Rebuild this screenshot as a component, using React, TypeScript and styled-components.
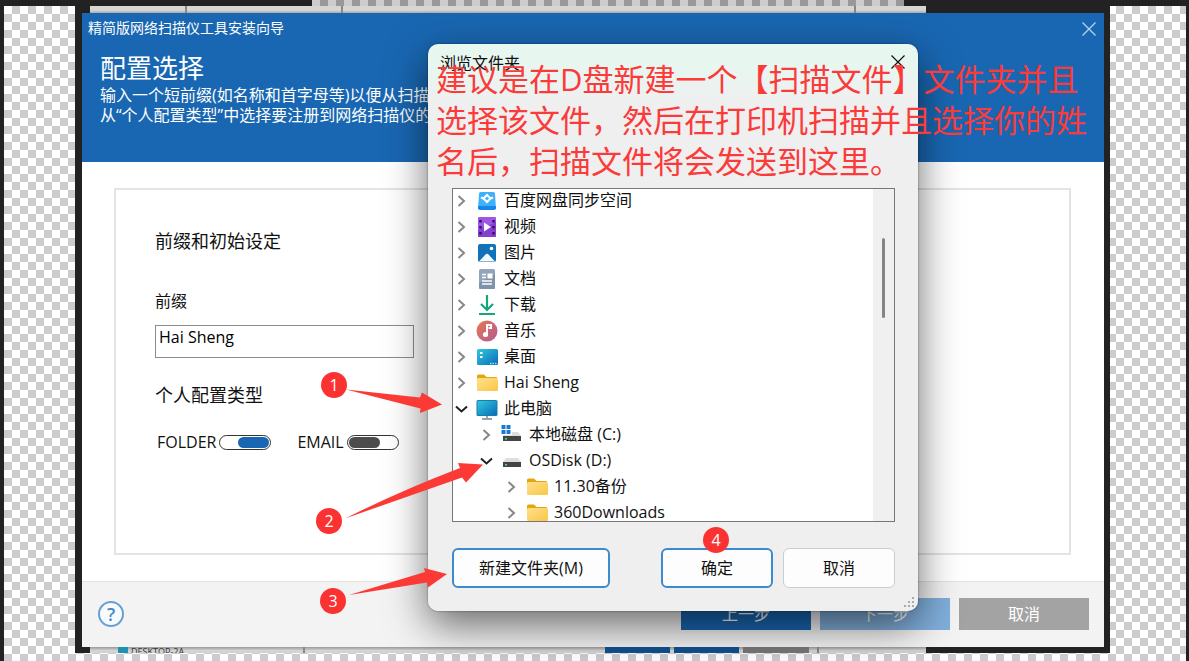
import React from 'react';
import styled, { createGlobalStyle, css } from 'styled-components';

const Global = createGlobalStyle`
  *, *::before, *::after { box-sizing: border-box; }
  body { margin: 0; overflow: hidden; font-family: "Open Sans", "Noto Sans CJK SC", sans-serif; font-size: 16px; color: #111; }
  h1, h2, p, ul { margin: 0; padding: 0; font-weight: 400; }
  button, input { font: inherit; }
`;

const Desktop = styled.main`
  position: relative;
  min-height: 100vh;
  display: flex;
  flex-direction: column;
  border-left: 4px solid #222;
  border-right: 3px solid #222;
  background: repeating-conic-gradient(#ccc 0 25%, #fff 0 50%) 0 6px / 16px 16px;
`;

const TopBar = styled.div`
  height: 6px;
  display: flex;
  justify-content: space-between;
  background: #222;
  padding: 0 282px 0 308px;
`;

const TopChecker = styled.div`
  flex: 1;
  background: repeating-conic-gradient(#999 0 25%, #ccc 0 50%) 0 -2px / 16px 16px;
`;

const Frame = styled.div`
  flex: 1;
  display: flex;
  flex-direction: column;
  margin: 0 76px 8px 71px;
  padding: 0 6px 0 7px;
  background: #222;
`;

const Strip = styled.div<{ $bottom?: boolean }>`
  display: flex;
  align-items: flex-start;
  height: ${p => (p.$bottom ? 6 : 7)}px;
  margin: 0 178px 0 8px;
  overflow: hidden;
  background: ${p => (p.$bottom ? 'linear-gradient(#999, #d4d4d4 60%)' : 'linear-gradient(#d8d5d2 60%, #aaa)')};
`;

const Cell = styled.span<{ $w: number; $bg?: string; $line?: boolean; $gap?: number }>`
  flex: none;
  width: ${p => p.$w}px;
  height: 100%;
  margin-right: ${p => p.$gap ?? 0}px;
  background: ${p => p.$bg ?? 'transparent'};
  ${p => p.$line && css`border-right: 2px solid #888;`}
`;

const ClippedName = styled.span`
  flex: none;
  width: 56px;
  font-size: 9px;
  line-height: 10px;
  white-space: nowrap;
  color: #333;
`;

const Wizard = styled.section`
  flex: 1;
  display: flex;
  flex-direction: column;
  background: #fff;
`;

const WizardHeader = styled.header`
  height: 149px;
  padding: 4px 6px;
  background: #1967b2;
  color: #fff;
`;

const TitleRow = styled.div`
  display: flex;
  justify-content: space-between;
  font-size: 14px;
  line-height: 22px;
`;

const IconButton = styled.button<{ $color?: string }>`
  display: grid;
  place-items: center;
  width: 18px;
  height: 24px;
  border: 0;
  padding: 0;
  background: none;
  color: ${p => p.$color ?? 'inherit'};
`;

const HeaderText = styled.div`
  padding: 10px 12px 0;
  h1 { font-size: 26px; line-height: 34px; }
  p { font-size: 16px; line-height: 20px; white-space: nowrap; }
`;

const WizardBody = styled.div`
  flex: 1;
  display: flex;
  padding: 26px 33px 26px 32px;
`;

const Settings = styled.form`
  flex: 1;
  border: 2px solid #e4e4e4;
  padding: 37px 39px;
  display: flex;
  flex-direction: column;
  align-items: flex-start;
`;

const Heading = styled.h2`
  font-size: 18px;
  line-height: 28px;
`;

const FieldLabel = styled.label`
  margin-top: 34px;
  line-height: 24px;
`;

const TextInput = styled.input`
  width: 259px;
  height: 33px;
  margin: 12px 0 23px;
  padding: 0 3px 10px;
  border: 1px solid #8c8c8c;
  border-radius: 0;
  outline: 0;
  background: transparent;
`;

const Toggles = styled.div`
  display: flex;
  gap: 26px;
  margin-top: 21px;
  padding-left: 2px;
`;

const ToggleLabel = styled.label`
  display: flex;
  align-items: center;
  gap: 3px;
  line-height: 24px;
`;

const Toggle = styled.input`
  appearance: none;
  display: flex;
  width: 52px;
  height: 15px;
  margin: 0;
  padding: 1px;
  border: 1px solid #333;
  border-radius: 8px;
  background: #fff;
  &::before { content: ''; width: 31px; background: #4d4d4d; border-radius: 6px; }
  &:checked { justify-content: flex-end; }
  &:checked::before { background: #1967b2; }
`;

const WizardFooter = styled.footer`
  display: flex;
  align-items: center;
  gap: 9px;
  height: 66px;
  padding: 0 15px 1px 16px;
  border-top: 1px solid #e2e2e2;
  background: #f3f3f3;
`;

const Help = styled.button`
  width: 26px;
  height: 26px;
  margin-right: auto;
  padding: 0;
  border: 2px solid #6b9fd0;
  border-radius: 50%;
  background: #f8fbfe;
  color: #4a86c2;
  font-size: 18px;
  font-weight: 600;
  line-height: 20px;
`;

const StepButton = styled.button<{ $bg: string }>`
  width: 130px;
  height: 32px;
  padding: 0;
  border: 0;
  background: ${p => p.$bg};
  color: #fff;
  line-height: 30px;
`;

const Dialog = styled.section`
  position: absolute;
  left: 424px;
  top: 44px;
  width: 490px;
  height: 567px;
  padding: 0 23px 0 24px;
  border-radius: 10px;
  background: linear-gradient(#e6f8f0, #e8f6f0 24px, #efefef 60px);
  box-shadow: 0 0 2px rgba(0, 0, 0, .5), 0 14px 42px rgba(0, 0, 0, .58);
`;

const DialogTitle = styled.header`
  display: flex;
  justify-content: space-between;
  align-items: center;
  height: 36px;
  margin: 0 -12px 108px;
`;

const Tree = styled.ul`
  position: relative;
  height: 334px;
  overflow: hidden;
  border: 1px solid #777;
  background: linear-gradient(to left, #f0f0f0 21px, #fff 21px);
  list-style: none;
`;

const Row = styled.li<{ $level: number }>`
  display: flex;
  align-items: center;
  height: 26px;
  padding: 0 0 2px ${p => p.$level * 25}px;
  line-height: 24px;
  white-space: nowrap;
  svg { flex: none; }
`;

const RowLabel = styled.span`
  margin-left: 6px;
  padding-bottom: 2px;
`;

const Thumb = styled.span`
  position: absolute;
  right: 9px;
  top: 49px;
  width: 3px;
  height: 80px;
  border-radius: 2px;
  background: #858585;
`;

const Actions = styled.div`
  display: flex;
  gap: 10px;
  margin-top: 26px;
`;

const DialogButton = styled.button<{ $accent?: boolean; $wide?: boolean }>`
  width: ${p => (p.$wide ? 158 : 112)}px;
  height: 40px;
  padding: 0 0 2px;
  margin-right: ${p => (p.$wide ? 'auto' : 0)};
  border: ${p => (p.$accent ? '2px solid #3d8bcd' : '1px solid #ccc')};
  border-radius: 6px;
  background: #fdfdfd;
  color: #111;
`;

const Grip = styled.svg`
  position: absolute;
  right: 3px;
  bottom: 2px;
`;

const Note = styled.p`
  position: absolute;
  left: 432px;
  top: 59px;
  color: #fb3a3a;
  font-size: 31px;
  line-height: 41px;
  white-space: nowrap;
`;

const Arrows = styled.svg`
  position: absolute;
  left: 306px;
  top: 365px;
  pointer-events: none;
`;

const Badge = styled.span<{ $x: number; $y: number }>`
  position: absolute;
  left: ${p => p.$x - 4}px;
  top: ${p => p.$y}px;
  width: 26px;
  height: 26px;
  border-radius: 50%;
  background: #fb3232;
  color: #fff;
  text-align: center;
  line-height: 26px;
`;

const Cross = ({ size }: { size: number }) => (
  <svg width={size} height={size} viewBox="0 0 14 14" stroke="currentColor" strokeWidth="1.2" fill="none">
    <path d="M.5.5l13 13M13.5.5l-13 13" />
  </svg>
);

const Chevron = ({ open }: { open?: boolean }) => (
  <svg width="18" height="18" viewBox="0 0 18 18" fill="none" stroke={open ? '#222' : '#888'} strokeWidth="2">
    <path d={open ? 'M3 6.500l5.500 5 5.500-5' : 'M5.500 4l5.500 5-5.500 5'} />
  </svg>
);

type Kind = 'baidu' | 'video' | 'picture' | 'doc' | 'download' | 'music' | 'desktop' | 'folder' | 'pc' | 'cdrive' | 'drive';

const glyphs: Record<Kind, React.ReactNode> = {
  baidu: (
    <>
      <path d="M4.500 2h13q1.500 0 1.500 2l1 15H2L3 4Q3 2 4.500 2z" fill="#3db2fb" />
      <path d="M2 16h18v2q0 2-2 2H4q-2 0-2-2z" fill="#1687ea" />
      <path d="M11 5l3.500 3.500L11 12 7.500 8.500z" fill="none" stroke="#fff" strokeWidth="2" />
      <path d="M5 7.500l2.500 1M17 7.500l-2.500 1" stroke="#fff" strokeWidth="2" />
    </>
  ),
  video: (
    <>
      <rect x="2" y="1" width="18" height="20" rx="1" fill="#9e56e4" />
      <path d="M2 14L20 6v14q0 1-1 1H3q-1 0-1-1z" fill="#8540cf" />
      <path d="M8 6.500l7 4.500-7 4.500z" fill="#fff" />
      <path d="M4.500 4v15M17.500 4v15" stroke="#35116d" strokeWidth="2.500" strokeDasharray="2.500 3.500" />
    </>
  ),
  picture: (
    <>
      <rect x="2" y="2" width="18" height="18" rx="2" fill="#1272b8" />
      <path d="M3 19.500l6.500-7q1.500-1.500 3 0l6.500 7z" fill="#f2faff" />
      <circle cx="15.500" cy="6.500" r="1.800" fill="#fff" />
    </>
  ),
  doc: (
    <>
      <rect x="3" y="1" width="16" height="20" rx="1.500" fill="#93a5bb" />
      <path d="M3 15L19 6v13.500q0 1.500-1.500 1.500h-13Q3 21 3 19.500z" fill="#7f93ac" />
      <path d="M6 6.500h4M6 9.500h4M6 13h10M6 16h10" stroke="#fff" strokeWidth="1.600" />
      <rect x="11.500" y="5.500" width="5" height="5" fill="#fff" />
    </>
  ),
  download: (
    <path d="M11 1v14M5 10l6 6 6-6M3 20h16" fill="none" stroke="#14a67e" strokeWidth="2.200" />
  ),
  music: (
    <>
      <circle cx="11" cy="11" r="10.500" fill="url(#musicFill)" />
      <circle cx="9.500" cy="14.500" r="2.600" fill="#fff" />
      <path d="M11 14.500V5h4v3h-2.500" fill="none" stroke="#fff" strokeWidth="2" />
    </>
  ),
  desktop: (
    <>
      <rect x="1" y="3" width="21" height="16" rx="1.500" fill="url(#screenFill)" />
      <path d="M4 7h2.500M4 11h2.500" stroke="#fff" strokeWidth="2" />
      <path d="M14 17.500h7" stroke="#8ce4ff" strokeWidth="1.500" strokeDasharray="1.500 1" />
    </>
  ),
  folder: (
    <>
      <path d="M1 4q0-1.500 1.500-1.500H8L10.500 5H20q1 0 1 1v5H1z" fill="#e5a50e" />
      <rect x="1" y="6" width="21" height="13" rx="1.500" fill="url(#folderFill)" />
    </>
  ),
  pc: (
    <>
      <path d="M11 16v5M6 21h10" stroke="#98a4ac" strokeWidth="2" />
      <rect x=".5" y="2" width="21" height="16" rx="1.500" fill="#187fa5" />
      <rect x="1.500" y="3" width="19" height="14" fill="url(#screenFill)" />
    </>
  ),
  cdrive: (
    <>
      <path d="M5 8h12l3 4H2z" fill="#ddd" />
      <rect x="2" y="12" width="18" height="5" fill="#444" />
      <rect x="4" y="14" width="2" height="1.500" fill="#58d68d" />
      <path d="M0 0h11v11H0z" fill="#fff" />
      <path d="M.5 1h4v4h-4zM5.500 1h4v4h-4zM.5 6h4v4h-4zM5.500 6h4v4h-4z" fill="#187bd0" />
    </>
  ),
  drive: (
    <>
      <path d="M5 8h12l3 4H2z" fill="#ddd" />
      <rect x="2" y="12" width="18" height="5" fill="#444" />
      <rect x="4" y="14" width="2" height="1.500" fill="#58d68d" />
    </>
  ),
};

const items: { kind: Kind; label: string; level: number; open?: boolean }[] = [
  { kind: 'baidu', label: '百度网盘同步空间', level: 0 },
  { kind: 'video', label: '视频', level: 0 },
  { kind: 'picture', label: '图片', level: 0 },
  { kind: 'doc', label: '文档', level: 0 },
  { kind: 'download', label: '下载', level: 0 },
  { kind: 'music', label: '音乐', level: 0 },
  { kind: 'desktop', label: '桌面', level: 0 },
  { kind: 'folder', label: 'Hai Sheng', level: 0 },
  { kind: 'pc', label: '此电脑', level: 0, open: true },
  { kind: 'cdrive', label: '本地磁盘 (C:)', level: 1 },
  { kind: 'drive', label: 'OSDisk (D:)', level: 1, open: true },
  { kind: 'folder', label: '11.30备份', level: 2 },
  { kind: 'folder', label: '360Downloads', level: 2 },
];

const Glyph = styled.svg`
  margin-left: 5px;
`;

export default function App() {
  return (
    <Desktop>
      <Global />
      <TopBar><TopChecker /></TopBar>
      <Frame>
        <Strip>
          <Cell $w={97} $line /><Cell $w={156} $line /><Cell $w={513} $line />
        </Strip>
        <Wizard>
          <WizardHeader>
            <TitleRow>
              <span>精简版网络扫描仪工具安装向导</span>
              <IconButton aria-label="关闭向导" $color="#b9d6f2"><Cross size={14} /></IconButton>
            </TitleRow>
            <HeaderText>
              <h1>配置选择</h1>
              <p>输入一个短前缀(如名称和首字母等)以便从扫描仪</p>
              <p>从“个人配置类型”中选择要注册到网络扫描仪的个</p>
            </HeaderText>
          </WizardHeader>
          <WizardBody>
            <Settings>
              <Heading>前缀和初始设定</Heading>
              <FieldLabel htmlFor="prefix">前缀</FieldLabel>
              <TextInput id="prefix" defaultValue="Hai Sheng" />
              <Heading>个人配置类型</Heading>
              <Toggles>
                <ToggleLabel>FOLDER<Toggle type="checkbox" defaultChecked /></ToggleLabel>
                <ToggleLabel>EMAIL<Toggle type="checkbox" /></ToggleLabel>
              </Toggles>
            </Settings>
          </WizardBody>
          <WizardFooter>
            <Help aria-label="帮助">?</Help>
            <StepButton $bg="#1967b2">上一步</StepButton>
            <StepButton $bg="#80aedb">下一步</StepButton>
            <StepButton $bg="#a3a3a3">取消</StepButton>
          </WizardFooter>
        </Wizard>
        <Strip $bottom>
          <Cell $w={28} /><Cell $w={10} $bg="#2290b0" $gap={3} />
          <ClippedName>DESKTOP-2A</ClippedName>
          <Cell $w={118} $line /><Cell $w={300} />
          <Cell $w={65} $bg="#11508f" $gap={4} /><Cell $w={65} $bg="#11508f" $gap={4} /><Cell $w={66} $bg="#777" $gap={6} /><Cell $w={4} $line />
        </Strip>
      </Frame>

      <Dialog role="dialog" aria-label="浏览文件夹">
        <DialogTitle>
          <span>浏览文件夹</span>
          <IconButton aria-label="关闭"><Cross size={14} /></IconButton>
        </DialogTitle>
        <Tree>
          {items.map(item => (
            <Row key={item.label} $level={item.level}>
              <Chevron open={item.open} />
              <Glyph width="22" height="22" viewBox="0 0 22 22">{glyphs[item.kind]}</Glyph>
              <RowLabel>{item.label}</RowLabel>
            </Row>
          ))}
          <Thumb />
        </Tree>
        <Actions>
          <DialogButton $accent $wide>新建文件夹(M)</DialogButton>
          <DialogButton $accent>确定</DialogButton>
          <DialogButton>取消</DialogButton>
        </Actions>
        <Grip width="12" height="12" viewBox="0 0 12 12" fill="#aaa">
          <path d="M9 0h2v2H9zM9 4h2v2H9zM5 4h2v2H5zM9 8h2v2H9zM5 8h2v2H5zM1 8h2v2H1z" />
        </Grip>
        <svg width="0" height="0">
          <defs>
            <linearGradient id="musicFill" x2="1" y2="1"><stop stopColor="#e8794f" /><stop offset="1" stopColor="#b35a92" /></linearGradient>
            <linearGradient id="screenFill" x2="1" y2="1"><stop stopColor="#2fc8e0" /><stop offset="1" stopColor="#0a6cb8" /></linearGradient>
            <linearGradient id="folderFill" x2="1" y2="1"><stop stopColor="#ffe08a" /><stop offset="1" stopColor="#f9c647" /></linearGradient>
          </defs>
        </svg>
      </Dialog>

      <Note>
        建议是在D盘新建一个【扫描文件】文件夹并且<br />
        选择该文件，然后在打印机扫描并且选择你的姓<br />
        名后，扫描文件将会发送到这里。
      </Note>
      <Arrows width="190" height="250" viewBox="310 365 190 250" fill="#fb3a36">
        <path d="M346 389.500L420 397.500 422 392.500 442 404.500 420 413 420.500 408.500z" />
        <path d="M345 518.500Q400 491 460 468L458 463 483 464.500 466 482.500 462 477.500z" />
        <path d="M349 595L425 572 424 568 447 574 428 587.500 427 582.500z" />
      </Arrows>
      <Badge $x={321} $y={372}>1</Badge>
      <Badge $x={316} $y={508}>2</Badge>
      <Badge $x={320} $y={588}>3</Badge>
      <Badge $x={703} $y={527}>4</Badge>
    </Desktop>
  );
}
